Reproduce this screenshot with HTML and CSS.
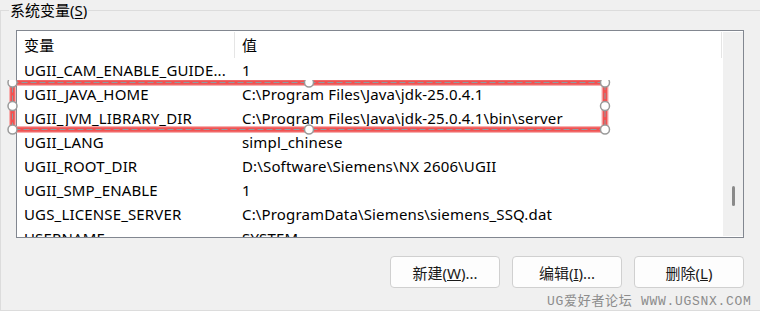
FILE: index.html
```html
<!DOCTYPE html>
<html lang="zh-CN">
<head>
    <meta charset="UTF-8">
    <title>系统变量</title>
    <link rel="stylesheet" href="styles.css">
</head>
<body>
    <fieldset class="group">
        <legend class="group-title">系统变量(<u>S</u>)</legend>

        <div class="listbox">
            <div class="list">
                <div class="list-head">
                    <div class="col col-name">变量</div>
                    <div class="col col-value">值</div>
                </div>
                <div class="row">
                    <div class="col col-name">UGII_CAM_ENABLE_GUIDE...</div>
                    <div class="col col-value">1</div>
                </div>
                <div class="row">
                    <div class="col col-name">UGII_JAVA_HOME</div>
                    <div class="col col-value">C:\Program Files\Java\jdk-25.0.4.1</div>
                </div>
                <div class="row">
                    <div class="col col-name">UGII_JVM_LIBRARY_DIR</div>
                    <div class="col col-value">C:\Program Files\Java\jdk-25.0.4.1\bin\server</div>
                </div>
                <div class="row">
                    <div class="col col-name">UGII_LANG</div>
                    <div class="col col-value">simpl_chinese</div>
                </div>
                <div class="row">
                    <div class="col col-name">UGII_ROOT_DIR</div>
                    <div class="col col-value">D:\Software\Siemens\NX 2606\UGII</div>
                </div>
                <div class="row">
                    <div class="col col-name">UGII_SMP_ENABLE</div>
                    <div class="col col-value">1</div>
                </div>
                <div class="row">
                    <div class="col col-name">UGS_LICENSE_SERVER</div>
                    <div class="col col-value">C:\ProgramData\Siemens\siemens_SSQ.dat</div>
                </div>
                <div class="row">
                    <div class="col col-name">USERNAME</div>
                    <div class="col col-value">SYSTEM</div>
                </div>
            </div>
            <div class="scrollbar">
                <div class="scroll-thumb"></div>
            </div>
        </div>

        <div class="actions">
            <button class="btn">新建(<u>W</u>)...</button>
            <button class="btn">编辑(<u>I</u>)...</button>
            <button class="btn">删除(<u>L</u>)</button>
        </div>
    </fieldset>

    <!-- 标注框 -->
    <svg class="markup" width="620" height="60" viewBox="0 0 620 60">
        <rect x="12.5" y="2.5" width="592.5" height="47" fill="none" stroke="#f6b0b0" stroke-width="7"/>
        <rect x="12.5" y="2.5" width="592.5" height="47" fill="none" stroke="#f05252" stroke-width="4.5"/>
        <rect x="12.5" y="2.5" width="592.5" height="47" fill="none" stroke="#8e9ca0" stroke-width="1" stroke-dasharray="6 3"/>
        <g fill="#fff" stroke="#9a9a9a" stroke-width="1.5">
            <circle cx="12.5" cy="2.5" r="4.5"/>
            <circle cx="309" cy="2.5" r="4.5"/>
            <circle cx="605" cy="2.5" r="4.5"/>
            <circle cx="12.5" cy="26" r="4.5"/>
            <circle cx="605" cy="26" r="4.5"/>
            <circle cx="12.5" cy="49.5" r="4.5"/>
            <circle cx="309" cy="49.5" r="4.5"/>
            <circle cx="605" cy="49.5" r="4.5"/>
        </g>
    </svg>

    <div class="watermark">UG爱好者论坛 WWW.UGSNX.COM</div>
</body>
</html>
```

FILE: styles.css
```css
:root {
    --bg-color: #f0f0f0;
    --group-line: #dcdcdc;
    --list-border: #828790;
    --divider: #e5e5e5;
    --text-color: #000000;
}

* {
    box-sizing: border-box;
}

body {
    margin: 0;
    width: 760px;
    height: 311px;
    overflow: hidden;
    position: relative;
    background-color: var(--bg-color);
    color: var(--text-color);
    font-family: "Noto Sans", "Noto Sans CJK SC", sans-serif;
    font-size: 15px;
}

/* --- 分组框 --- */
.group {
    margin: 0;
    width: 760px;
    height: 311px;
    padding: 10px 0 0 15px;
    border: 1px solid var(--group-line);
    border-right: none;
}

.group-title {
    margin-left: -7px;
    padding: 0 1px;
    line-height: 20px;
    height: 20px;
}

.group-title u {
    text-underline-offset: 2px;
}

/* --- 列表 --- */
.listbox {
    width: 728px;
    height: 208px;
    border: 1px solid var(--list-border);
    background-color: #ffffff;
    display: flex;
    overflow: hidden;
}

.list {
    width: 706px;
    overflow: hidden;
    letter-spacing: 0.15px;
}

.list-head,
.row {
    display: flex;
    white-space: nowrap;
}

.list-head {
    height: 27px;
    line-height: 27px;
    padding-top: 1px;
}

.row {
    height: 24px;
    line-height: 24px;
}

.col-name {
    width: 217px;
    padding-left: 7px;
}

.col-value {
    flex: 1;
    padding-left: 8px;
}

.list-head .col {
    line-height: 26px;
    height: 26px;
}

.list-head .col-value {
    border-left: 1px solid var(--divider);
    border-right: 1px solid var(--divider);
    margin-right: 1px;
    padding-left: 7px;
}

.scrollbar {
    width: 20px;
    margin: 1px 0 1px 0;
    background-color: var(--bg-color);
    display: flex;
    justify-content: center;
    padding-top: 154px;
}

.scroll-thumb {
    width: 3px;
    height: 20px;
    border-radius: 2px;
    background-color: #8a8a8a;
}

/* --- 按钮 --- */
.actions {
    width: 728px;
    display: flex;
    justify-content: flex-end;
    gap: 12px;
    margin-top: 18px;
}

.btn {
    width: 110px;
    height: 32px;
    padding: 0;
    font-family: inherit;
    font-size: 15px;
    color: #1a1a1a;
    background-color: #fdfdfd;
    border: 1px solid #d0d0d0;
    border-radius: 4px;
}

/* --- 覆盖层 --- */
.markup {
    position: absolute;
    left: 0;
    top: 80px;
}

.watermark {
    position: absolute;
    left: 547px;
    top: 290px;
    font-family: "Liberation Mono", "Noto Sans CJK SC", monospace;
    font-size: 13px;
    letter-spacing: 0.7px;
    color: #8c8c8c;
    white-space: nowrap;
}
```
